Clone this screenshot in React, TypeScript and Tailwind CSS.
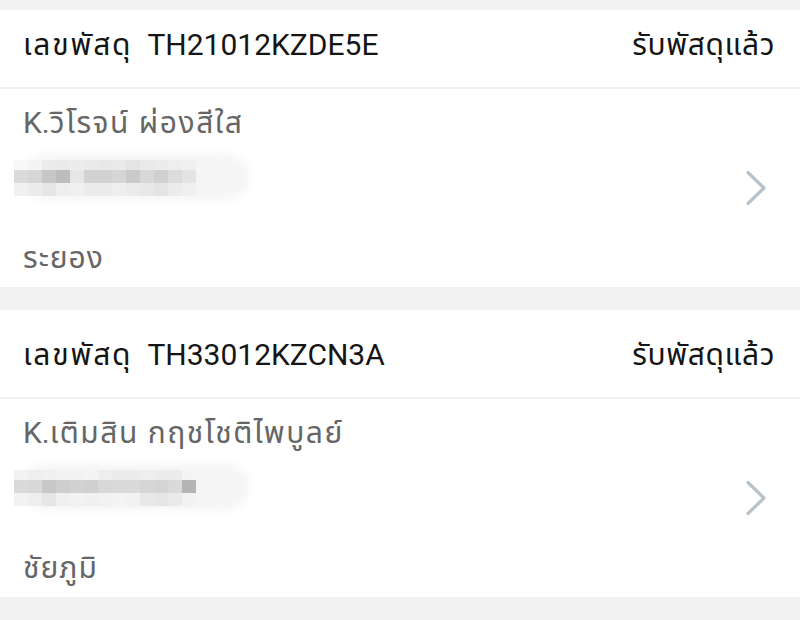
import React from 'react';

type Parcel = {
  id: string;
  name: string;
  province: string;
  headerTop: string;
  headerHeight: string;
  blocks: string[][];
};

const parcels: Parcel[] = [
  {
    id: 'TH21012KZDE5E',
    name: 'วิโรจน์ ผ่องสีใส',
    province: 'ระยอง',
    headerTop: 'pt-[17px]',
    headerHeight: 'h-[77px]',
    blocks: [
      ['#f8f8f8', '#f4f4f4', '#ececec', '#eaeaea', '#ececec', '#eaeaea', '#e8e8e8', '#eaeaea', '#e4e4e4', '#eaeaea', '#ececec', '#eeeeee', '#f0f0f0'],
      ['#dadada', '#d6d6d6', '#c6c6c6', '#bdbdbd', '#e6e6e6', '#d2d2d2', '#d2d2d2', '#d6d6d6', '#cacaca', '#d8d8d8', '#d0d0d0', '#dcdcdc', '#e4e4e4'],
      ['#f0f0f0', '#ececec', '#e6e6e6', '#eeeeee', '#f0f0f0', '#ececec', '#ececec', '#eeeeee', '#ebebeb', '#e8e8e8', '#e4e4e4', '#ececec', '#f0f0f0'],
    ],
  },
  {
    id: 'TH33012KZCN3A',
    name: 'เติมสิน กฤชโชติไพบูลย์',
    province: 'ชัยภูมิ',
    headerTop: 'pt-[27px]',
    headerHeight: 'h-[87px]',
    blocks: [
      ['#f2f2f2', '#eeeeee', '#f0f0f0', '#f2f2f2', '#f2f2f2', '#f4f4f4', '#eeeeee', '#ececec', '#ececec', '#eeeeee', '#ececec', '#ececec', '#f4f4f4'],
      ['#dadada', '#d8d8d8', '#c8c8c8', '#cecece', '#d2d2d2', '#d0d0d0', '#d8d8d8', '#dadada', '#dadada', '#d6d6d6', '#d4d4d4', '#dadada', '#b4b4b4'],
      ['#f2f2f2', '#eeeeee', '#e6e6e6', '#f0f0f0', '#f2f2f2', '#f0f0f0', '#f2f2f2', '#f4f4f4', '#f2f2f2', '#e8e8e8', '#e6e6e6', '#eaeaea', '#f2f2f2'],
    ],
  },
];

function Chevron() {
  return (
    <svg width="22" height="36" viewBox="0 0 22 36" fill="none">
      <path d="M3 2.5 L19 18 L3 33.5" stroke="#b7c2ca" strokeWidth={3.2} strokeLinecap="round" strokeLinejoin="round" />
    </svg>
  );
}

// pixelated address line (blurred out in the original)
function Censored({ rows }: { rows: string[][] }) {
  return (
    <div className="relative -ml-[9px] h-[36px] w-[222px]">
      <div className="absolute left-[10px] -top-[6px] h-[46px] w-[225px] rounded-full bg-[#f5f5f5] blur-[4px]" />
      <div className="relative flex flex-col blur-[0.6px]">
        {rows.map((row, r) => (
          <div key={r} className={r === 0 ? 'flex h-[10px]' : 'flex h-[13px]'}>
            {row.map((c, i) => (
              <div key={i} className="w-[14px]" style={{ backgroundColor: c }} />
            ))}
          </div>
        ))}
      </div>
    </div>
  );
}

function ParcelCard({ parcel }: { parcel: Parcel }) {
  return (
    <section className="bg-white">
      <div className={`flex items-start justify-between pl-[23px] pr-[25px] text-[30px] leading-[36px] text-[#151515] ${parcel.headerTop} ${parcel.headerHeight}`}>
        <div className="flex gap-[15px]">
          <span className="tracking-[1.8px]">เลขพัสดุ</span>
          <span>{parcel.id}</span>
        </div>
        <span className="tracking-[0.6px]">รับพัสดุแล้ว</span>
      </div>
      <div className="h-[2px] bg-[#efefef]" />
      <div className="flex h-[198px] items-center justify-between pl-[23px] pr-[33px]">
        <div className="flex h-full flex-col pt-[16px] text-[30px] leading-[36px] text-[#666666]">
          <span>
            K.<span className="tracking-[1.5px]">{parcel.name}</span>
          </span>
          <div className="mt-[19px]">
            <Censored rows={parcel.blocks} />
          </div>
          <span className="mt-[44px] tracking-[1px]">{parcel.province}</span>
        </div>
        <Chevron />
      </div>
    </section>
  );
}

export default function App() {
  return (
    <div className="min-h-[620px] bg-[#f2f2f2] pt-[10px] font-['Roboto','Noto_Sans_Thai','Noto_Sans',sans-serif]">
      <div className="flex flex-col gap-[23px]">
        {parcels.map((p) => (
          <ParcelCard key={p.id} parcel={p} />
        ))}
      </div>
    </div>
  );
}
